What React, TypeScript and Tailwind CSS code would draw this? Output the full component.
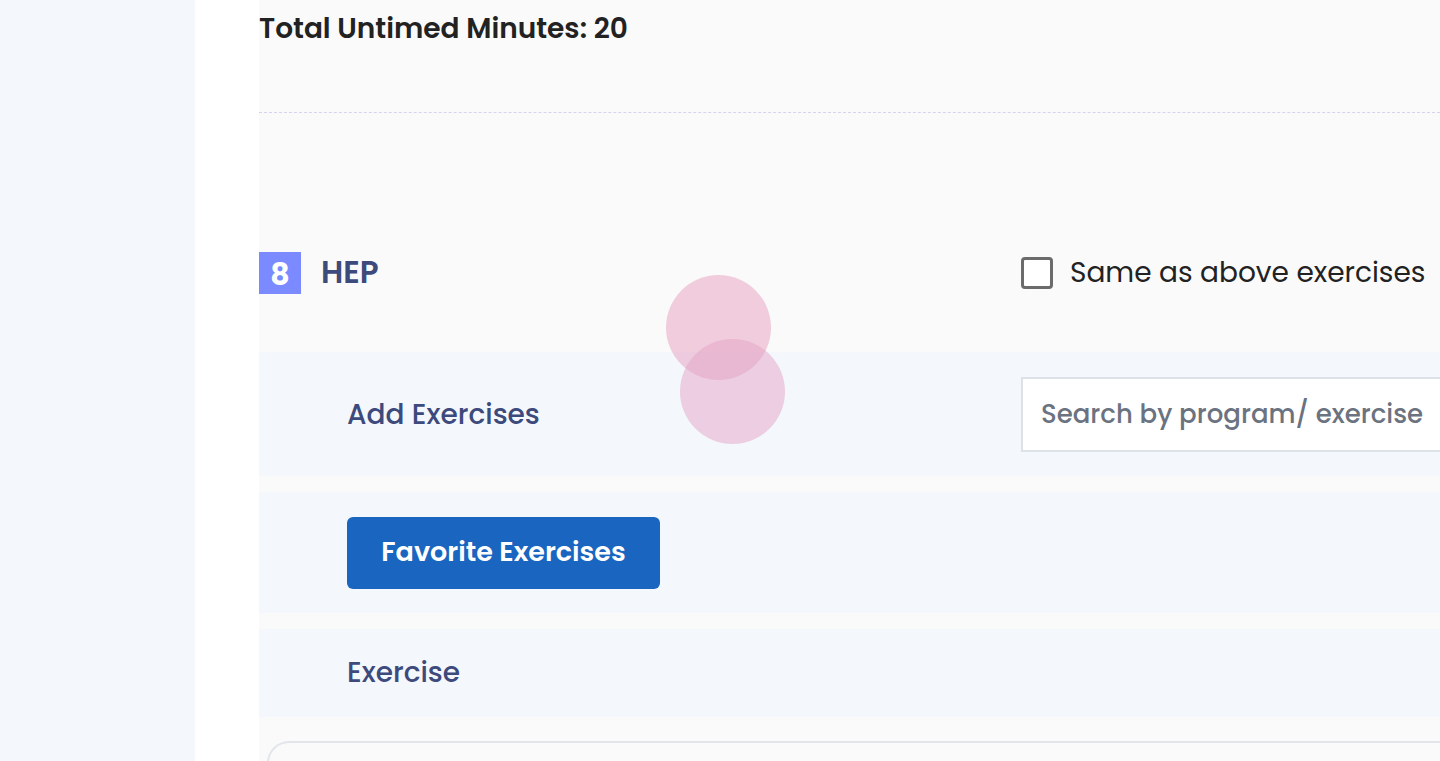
import React from "react";

const font = { fontFamily: "Poppins, 'Open Sans', 'Noto Sans', sans-serif" };

export default function App() {
    return (
        <div className="relative flex h-[761px] w-[1440px] overflow-hidden bg-[#fafafa]" style={font}>
            {/* left sidebar */}
            <div className="w-[195px] shrink-0 bg-[#f4f7fc]" />
            <div className="w-[64px] shrink-0 bg-white" />

            {/* main */}
            <div className="flex min-w-0 flex-1 flex-col">
                <div className="h-[113px] shrink-0 border-b border-dashed border-[#d4d3f0] pt-[11px]">
                    <p className="text-[28px] font-semibold leading-[36px] text-[#222222]">Total Untimed Minutes: 20</p>
                </div>

                <div className="flex h-[239px] shrink-0 items-center pt-[80px]">
                    <div className="flex h-[42px] w-[42px] items-center justify-center bg-[#7b8bff] pt-[4px] text-[30px] font-bold text-white">8</div>
                    <span className="ml-[20px] text-[31px] font-semibold text-[#3d4a7c]">HEP</span>
                    <label className="ml-auto flex w-[419px] items-center">
                        <span className="h-[32px] w-[32px] rounded-[4px] border-[3px] border-[#6b6b6b] bg-white" />
                        <span className="ml-[17px] text-[28px] text-[#222222]">Same as above exercises</span>
                    </label>
                </div>

                <div className="flex h-[124px] shrink-0 items-center bg-[#f4f7fc] pl-[88px]">
                    <span className="pt-[2px] text-[28px] font-medium text-[#3d4a7c]">Add Exercises</span>
                    <div className="ml-auto flex h-[75px] w-[419px] items-center border-2 border-r-0 border-[#dde1e8] bg-white pl-[18px]">
                        <span className="text-[26px] font-medium text-[#6b7280]">Search by program/ exercise</span>
                    </div>
                </div>

                <div className="h-[16px] shrink-0" />

                <div className="flex h-[121px] shrink-0 items-center bg-[#f4f7fc] pl-[88px]">
                    <button className="flex h-[72px] w-[313px] items-center justify-center rounded-[6px] bg-[#1a65c0] text-[27px] font-semibold text-white">
                        Favorite Exercises
                    </button>
                </div>

                <div className="h-[16px] shrink-0" />

                <div className="flex h-[88px] shrink-0 items-center bg-[#f4f7fc] pl-[88px]">
                    <span className="text-[28px] font-medium text-[#3d4a7c]">Exercise</span>
                </div>

                <div className="h-[24px] shrink-0" />
                <div className="ml-[8px] h-[60px] shrink-0 rounded-tl-[22px] border-l-2 border-t-2 border-[#e2e5ea] bg-[#fafafa]" />
            </div>

            {/* touch indicators */}
            <div className="pointer-events-none absolute left-[666px] top-[275px] h-[105px] w-[105px] rounded-full bg-[#e8a5c4]/55" />
            <div className="pointer-events-none absolute left-[680px] top-[339px] h-[105px] w-[105px] rounded-full bg-[#e3a3c6]/50" />
        </div>
    );
}
